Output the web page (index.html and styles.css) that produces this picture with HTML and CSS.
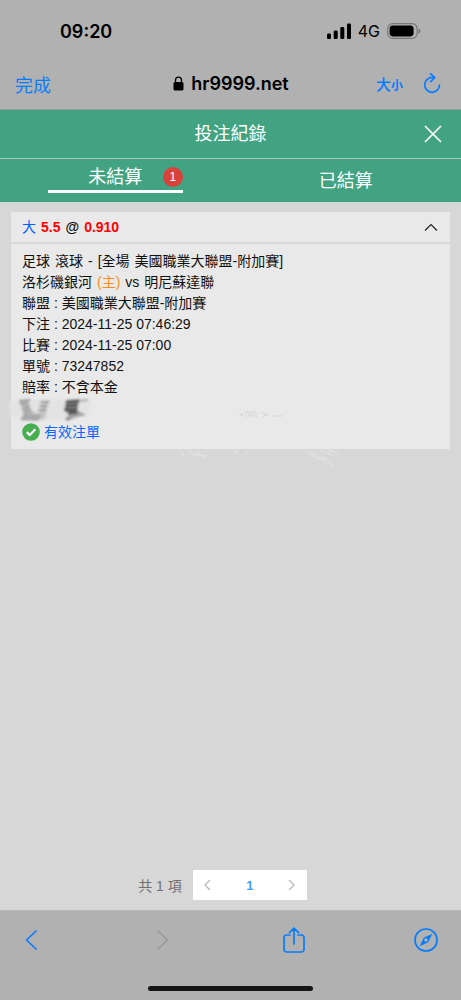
FILE: index.html
```html
<!DOCTYPE html>
<html lang="zh-Hant">
<head>
<meta charset="utf-8">
<meta name="viewport" content="width=device-width, initial-scale=1">
<title>投注紀錄</title>
<link rel="stylesheet" href="styles.css">
</head>
<body>
<div class="screen">
  <div class="status">
    <span class="clock">09:20</span>
    <div class="signals">
      <svg width="24" height="16" viewBox="0 0 24 16"><rect x="0" y="10.500" width="4" height="5.500" rx="1.200"/><rect x="6.700" y="7.500" width="4" height="8.500" rx="1.200"/><rect x="13.300" y="4" width="4" height="12" rx="1.200"/><rect x="20" y="0.500" width="4" height="15.500" rx="1.200"/></svg>
      <span class="network">4G</span>
      <svg width="34" height="16" viewBox="0 0 34 16"><rect x="0.700" y="0.700" width="29.500" height="14.600" rx="5" fill="none" stroke="#777" stroke-width="1.200"/><rect x="2.600" y="2.600" width="24" height="10.800" rx="3.300"/><path d="M31.500 5.400q2 .6 2 2.600t-2 2.600z" fill="#777"/></svg>
    </div>
  </div>
  <div class="browser">
    <button class="done" type="button">完成</button>
    <div class="address">
      <svg width="11" height="15" viewBox="0 0 11 15"><rect x="0.500" y="6" width="10" height="8.500" rx="1.500"/><path d="M2.500 7V4.200a3 3 0 0 1 6 0V7" fill="none" stroke="#000" stroke-width="1.300"/></svg>
      <span>hr9999.net</span>
    </div>
    <div class="tools">
      <button class="textsize" type="button"><span>大</span><small>小</small></button>
      <button type="button" aria-label="重新載入"><svg class="line" width="18" height="21" viewBox="0 0 18 21"><path d="M9.500 4.500A7.400 7.400 0 1 0 16.500 12M6.500 4.500H11.500M7.700 .8l4 3.800-4 4"/></svg></button>
    </div>
  </div>
  <header class="title">
    <h1>投注紀錄</h1>
    <button class="close" type="button" aria-label="關閉"><svg width="18" height="18" viewBox="0 0 18 18"><path d="M1 1l16 16M17 1L1 17"/></svg></button>
  </header>
  <nav class="tabs">
    <button class="tab tab-active" type="button"><span class="tab-label">未結算<span class="badge">1</span></span></button>
    <button class="tab" type="button">已結算</button>
  </nav>
  <main class="content">
    <article class="card">
      <div class="card-head">
        <h2><span class="pick">大</span><span class="odds">5.5</span><span>@</span><span class="odds">0.910</span></h2>
        <button type="button" aria-label="收合"><svg width="14" height="9" viewBox="0 0 14 9"><path d="M1 7.500l6-6 6 6" fill="none" stroke="#222" stroke-width="1.200"/></svg></button>
      </div>
      <div class="card-body">
        <p class="match"><span>足球</span><span>滾球</span><span>-</span><span>[全場</span><span>美國職業大聯盟-附加賽]</span></p>
        <p class="match"><span>洛杉磯銀河</span><span class="home">(主)</span><span>vs</span><span>明尼蘇達聯</span></p>
        <p>聯盟 : 美國職業大聯盟-附加賽</p>
        <p>下注 : 2024-11-25 07:46:29</p>
        <p>比賽 : 2024-11-25 07:00</p>
        <p>單號 : 73247852</p>
        <p>賠率 : 不含本金</p>
        <svg class="smudge" width="90" height="26" viewBox="0 0 90 26" aria-hidden="true">
          <defs><filter id="soft" x="-20%" y="-20%" width="140%" height="140%"><feGaussianBlur stdDeviation="0.800"/></filter></defs>
          <g filter="url(#soft)">
            <path d="M-2 4l14-4 32 2 22-2 14 1-1 11-16 10-44 1-20-5z" fill="#e3e3e3"/>
            <path d="M8 2L19 1 18 8 21 15 29 14 32 3 39 2 36 11 34 21 25 23 9 22 12 17z" fill="#c6c6c6"/>
            <path d="M8 3l11-1M9 6l8-1M12 9l7-1M12 12l8-1M13 15l9-1M12 18h18M10 21h18M29 4h9M28 8h8M27 12h8" stroke="#8b8b8b" stroke-width="1.300" fill="none"/>
            <path d="M55 2L69 1 67 9 67 13 75 17 65 19 56 23 54 21 58 17 53 12z" fill="#8e8e8e"/>
            <path d="M55 4l13-1M55 8l11-1M53 12l13-1M57 15l9-1" stroke="#4c4c4c" stroke-width="2.500"/>
            <path d="M68 3l9-1M66 16l8 1M57 19l8-1" stroke="#aaa" stroke-width="1.800"/>
          </g>
        </svg>
        <div class="state">
          <svg width="18" height="18" viewBox="0 0 18 18"><circle cx="9" cy="9" r="8.800" fill="#46ae50"/><path d="M4.800 9.100l2.900 2.900 5.700-5.700" fill="none" stroke="#fff" stroke-width="2.200"/></svg>
          <span>有效注單</span>
        </div>
      </div>
      <svg class="traces" width="170" height="64" viewBox="0 0 170 64" aria-hidden="true">
        <g fill="none" stroke="#d0d0d0"><path d="M60 11l4 3M61 14l4-3M69 9l-2 2M67 11v5M67 10h10v6M70 12h4v2h-4zM82 10l7 4M83 15l7-4M94 14h10" stroke-width="0.700"/></g>
        <g fill="none" stroke="#e2e2e2" stroke-width="1.500" opacity=".8"><path d="M2 48l3 6M10 48l5 5 4-3 6 7M16 53l12 1M56 48l3 4M66 48l2 4M126 48l12 9 7-2 9 9M130 48l18 14M142 48l13 6M149 48l10 3M139 56l10 2"/></g>
      </svg>
    </article>
    <div class="pager">
      <span class="total">共 1 項</span>
      <div class="pages">
        <button type="button" aria-label="上一頁"><svg width="7" height="12" viewBox="0 0 7 12"><path d="M6 1L1 6l5 5"/></svg></button>
        <button class="page" type="button">1</button>
        <button type="button" aria-label="下一頁"><svg width="7" height="12" viewBox="0 0 7 12"><path d="M1 1l5 5-5 5"/></svg></button>
      </div>
    </div>
  </main>
  <footer class="toolbar">
    <div class="actions">
      <button type="button" aria-label="返回"><svg class="line" width="12" height="20" viewBox="0 0 12 20"><path d="M11 1L1.500 10l9.500 9"/></svg></button>
      <button type="button" aria-label="前進" disabled><svg class="line line-off" width="12" height="20" viewBox="0 0 12 20"><path d="M1 1l9.500 9L1 19"/></svg></button>
      <button type="button" aria-label="分享"><svg class="line" width="22" height="26" viewBox="0 0 22 26"><path d="M7 8H3.500A2.500 2.500 0 0 0 1 10.500v12A2.500 2.500 0 0 0 3.500 25h15a2.500 2.500 0 0 0 2.500-2.500v-12A2.500 2.500 0 0 0 18.500 8H15M11 17V1.500M6.500 5.700L11 1.200l4.500 4.500"/></svg></button>
      <button type="button" aria-label="Safari"><svg class="line" width="24" height="24" viewBox="0 0 24 24"><circle cx="12" cy="12" r="11"/><path fill="#087cff" stroke="none" fill-rule="evenodd" d="M18.300 5.700l-4 8.500-8.600 4.100 4-8.500zM12 10.200a1.800 1.800 0 1 0 0 3.600 1.800 1.800 0 0 0 0-3.600z"/></svg></button>
    </div>
    <div class="home-bar"></div>
  </footer>
</div>
</body>
</html>
```
FILE: styles.css
```css
* { box-sizing: border-box; }
body, h1, h2, p { margin: 0; }
body { font-family: "Liberation Sans", "Noto Sans CJK TC", sans-serif; color: #111; background: #d7d7d7; }
button { border: 0; padding: 0; background: none; font: inherit; color: inherit; display: flex; align-items: center; justify-content: center; }
svg { display: block; flex: none; }
.screen { min-height: 100vh; display: flex; flex-direction: column; }
.status { height: 58px; padding: 4px 40px 0 60px; background: #b1b1b1; display: flex; align-items: center; justify-content: space-between; color: #000; font-family: Inter, sans-serif; }
.clock { font-size: 18px; font-weight: 600; }
.signals { display: flex; align-items: center; gap: 7px; }
.network { font-size: 16px; }
.browser { height: 52px; padding: 0 20px 0 15px; background: #b1b1b1; border-bottom: 1px solid #999; display: grid; grid-template-columns: 1fr auto 1fr; align-items: center; color: #087cff; }
.done { justify-self: start; font-size: 18px; }
.address { display: flex; align-items: center; gap: 7px; padding-left: 6px; color: #000; font: 600 18px Inter, sans-serif; }
.tools { display: flex; align-items: center; justify-content: flex-end; gap: 20px; }
.textsize { align-items: baseline; font-size: 15px; font-weight: 500; }
.textsize small { font-size: 12px; font-weight: 700; }
.line { fill: none; stroke: #087cff; stroke-width: 1.7; stroke-linecap: round; stroke-linejoin: round; }
.line-off { stroke: #999; }
.title { height: 48px; padding: 0 19px; background: #41a381; color: #fff; display: grid; grid-template-columns: 1fr auto 1fr; align-items: center; }
.title h1 { grid-column: 2; font-size: 18px; line-height: 26px; font-weight: 400; }
.close { justify-self: end; }
.close svg { fill: none; stroke: #fff; stroke-width: 1.7; }
.tabs { height: 44px; background: #41a381; border-top: 1px solid #b7c7c0; color: #fff; display: grid; grid-template-columns: 1fr 1fr; font-size: 18px; }
.tab { padding-bottom: 4px; }
.tab-active { align-items: flex-start; padding: 0; }
.tab-label { position: relative; width: 135px; height: 34px; padding-top: 3px; line-height: 30px; border-bottom: 3px solid #fff; }
.badge { position: absolute; top: 8px; right: 0; width: 20px; height: 20px; border-radius: 50%; background: #d9413b; font-size: 12px; line-height: 20px; }
.content { flex: 1; padding: 10px 11px; display: flex; flex-direction: column; justify-content: space-between; }
.card { position: relative; background: #e9e9e9; font-size: 14px; }
.card-head { height: 32px; padding: 0 12px 0 11px; border-bottom: 2px solid #d9d9d9; display: flex; align-items: center; justify-content: space-between; }
.card-head h2 { display: flex; gap: 5px; font-size: 14px; line-height: 20px; font-weight: 700; }
.pick { color: #075fff; font-weight: 400; }
.odds { color: #f00; }
.card-body { padding: 7px 11px 8px; }
.card-body p { line-height: 21px; }
.card-body .match { display: flex; flex-wrap: wrap; column-gap: 5px; }
.home { color: #ff8d1c; }
.smudge { margin: 0 0 -1px -11px; overflow: visible; }
.state { display: flex; align-items: center; gap: 4px; line-height: 18px; color: #0b66ff; }
.traces { position: absolute; right: 101px; bottom: -17px; }
.pager { display: flex; align-items: center; justify-content: center; gap: 11px; padding-right: 16px; font-size: 14px; color: #707070; }
.pages { display: flex; height: 30px; background: #fff; }
.pages button { width: 30px; }
.pages .page { width: 54px; font-size: 13px; font-weight: 700; color: #409eff; }
.pages svg { fill: none; stroke: #b8bbc0; stroke-width: 1.4; }
.toolbar { height: 90px; padding: 14px 0 9px; background: #b1b1b1; border-top: 1px solid #b9b9b9; display: flex; flex-direction: column; align-items: center; justify-content: space-between; }
.actions { width: 100%; height: 30px; padding: 0 23px 0 19px; display: flex; align-items: center; justify-content: space-between; }
.actions button { width: 24px; }
.home-bar { width: 165px; height: 5px; border-radius: 3px; background: #151515; }
```
